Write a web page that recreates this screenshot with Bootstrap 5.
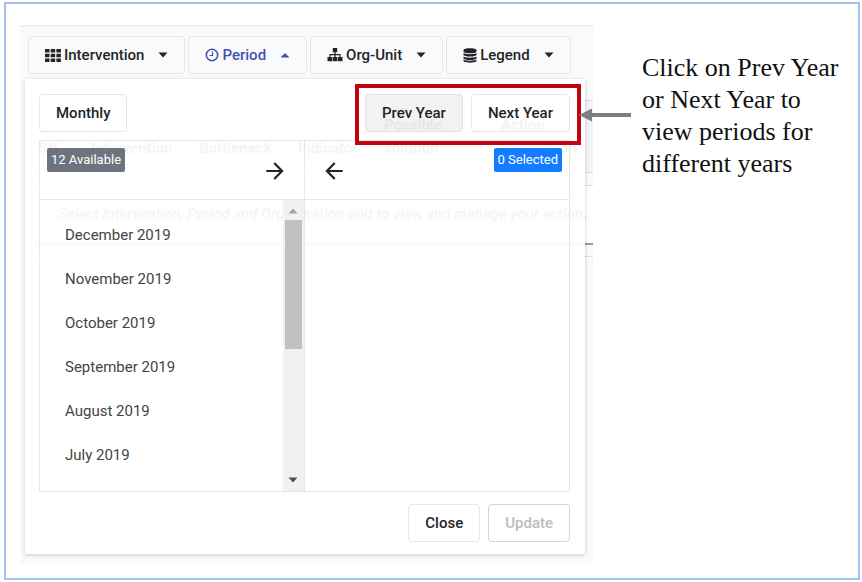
<!DOCTYPE html>
<html lang="en">
<head>
<meta charset="utf-8">
<meta name="viewport" content="width=device-width, initial-scale=1">
<title>Period selection</title>
<link href="https://cdn.jsdelivr.net/npm/bootstrap@5.3.0/dist/css/bootstrap.min.css" rel="stylesheet">
<style>
  body { font-family: Roboto, "Liberation Sans", sans-serif; font-size: 15px; line-height: 24px; color: #212529; background: #fff; }
  .page-frame { margin: 2px 2px 2px 4px; border: 2px solid #a2c4e9; min-height: calc(100vh - 4px); padding: 21px 0 13px 14px; }
  .app-area { flex: 1 1 0; min-width: 0; background: #fafafa; border-top: 2px solid #efefef; padding: 9px 8px 11px 5px; }
  .tool-row { gap: 3px; padding-left: 3px; margin-bottom: 5px; }
  .btn-ui { --bs-btn-font-size: 15px; --bs-btn-font-weight: 500; --bs-btn-line-height: 24px; --bs-btn-padding-x: 16px; --bs-btn-padding-y: 6px; --bs-btn-border-color: #e6e6e6; --bs-btn-color: #212529; --bs-btn-border-radius: 4px; --bs-btn-disabled-border-color: #d4d4d4; --bs-btn-disabled-color: #bdbdbd; --bs-btn-disabled-opacity: 1; --bs-btn-hover-border-color: #ccc; white-space: nowrap; }
  .btn-tool { display: flex; align-items: center; gap: 3px; }
  .btn-tool .caret { margin-left: 11px; }
  .btn-period { --bs-btn-color: #3f51b5; }
  .btn-prev { background: rgba(0,0,0,.05); --bs-btn-border-color: #e2e2e2; }
  .stage { display: grid; grid-template-columns: minmax(0, 1fr); }
  .stage > * { grid-area: 1 / 1; min-width: 0; }
  .plan { margin: 21px -8px 0 9px; overflow: hidden; align-self: start; }
  .plan table { width: 650px; table-layout: fixed; border-collapse: collapse; }
  .plan th { height: 72px; background: #f3f4f5; border-top: 1px solid #cfd8e6; border-bottom: 1px solid #cfd8e6; vertical-align: bottom; line-height: 23px; font-weight: 700; padding: 0 0 12px 4px; }
  .plan td { height: 58px; background: #fff; font-style: italic; font-weight: 500; padding: 0 0 0 24px; white-space: nowrap; border-bottom: 2px solid #999; }
  .plan .spacer-row td { height: 13px; background: #fafafa; border-bottom: 1px solid #ddd; }
  .period-panel { background: rgba(255,255,255,.95); box-shadow: 0 1px 4px rgba(0,0,0,.2); padding: 15px 15px 12px 14px; z-index: 1; }
  .year-nav { position: relative; gap: 8px; }
  .year-nav::after { content: ""; position: absolute; inset: -10px -11px -13px -10px; border: 4px solid #c00510; pointer-events: none; z-index: 2; }
  .pointer-arrow { position: absolute; left: calc(100% + 9px); top: 14px; z-index: 3; }
  .picker { border: 1px solid #e6e6e6; margin: 8px 0 12px; }
  .picker-half { flex: 1 1 0; min-width: 0; }
  .picker-half + .picker-half { border-left: 1px solid #e6e6e6; }
  .picker-top { height: 59px; border-bottom: 1px solid #e6e6e6; padding: 7px; }
  .picker-top .arrow-btn { padding: 0; border: 0; background: none; line-height: 0; align-self: flex-end; margin: 0 9px 8px; }
  .count-tag { --bs-badge-font-size: 13px; --bs-badge-font-weight: 400; --bs-badge-padding-x: 4px; --bs-badge-padding-y: 4px; --bs-badge-border-radius: 2px; line-height: 16px; align-self: flex-start; }
  .tag-gray { background: #6c757d; }
  .tag-blue { background: #147dff; }
  .month-list { padding: 13px 0 14px; }
  .month-list button { border: 0; padding: 10px 25px; background: transparent; color: #444; }
  .scroll-rail { width: 21px; background: #f1f1f1; padding: 7px 0 7px 2px; }
  .scroll-thumb { width: 17px; height: 129px; background: #c1c1c1; margin-top: 5px; }
  .note { flex: 0 0 216px; margin: 27px 0 0 49px; padding-right: 10px; font: 26px/32px "Liberation Serif", serif; color: #111; }
</style>
<script src="https://cdn.jsdelivr.net/npm/bootstrap@5.3.0/dist/js/bootstrap.bundle.min.js"></script>
</head>
<body>
<main class="page-frame d-flex align-items-start">
  <section class="app-area">
    <div class="tool-row d-flex">
      <button type="button" class="btn btn-ui btn-tool">
        <svg width="16" height="13" viewBox="0 0 16 13" fill="currentColor"><path d="M0 0h4.500v3.500H0zM5.700 0h4.500v3.500H5.700zM11.400 0h4.500v3.500h-4.500zM0 4.700h4.500v3.500H0zM5.700 4.700h4.500v3.500H5.700zM11.400 4.700h4.500v3.500h-4.500zM0 9.400h4.500v3.500H0zM5.700 9.400h4.500v3.500H5.700zM11.400 9.400h4.500v3.500h-4.500z"/></svg>
        Intervention
        <svg class="caret" width="10" height="6" viewBox="0 0 10 6" fill="currentColor"><path d="M.5 .5h9L5 5.500z"/></svg>
      </button>
      <button type="button" class="btn btn-ui btn-tool btn-period" aria-expanded="true">
        <svg width="14" height="14" viewBox="0 0 14 14" fill="none" stroke="currentColor"><circle cx="7" cy="7" r="5.700" stroke-width="1.600"/><path d="M7.500 3.500V7.500H4.500" stroke-width="1.200"/></svg>
        Period
        <svg class="caret" width="10" height="6" viewBox="0 0 10 6" fill="currentColor"><path d="M.5 5.500h9L5 1z"/></svg>
      </button>
      <button type="button" class="btn btn-ui btn-tool">
        <svg width="16" height="14" viewBox="0 0 16 14" fill="currentColor"><path d="M5.800 0h4.400v4.200H8.600v1.900h5v3h1.900v4.200h-4.600V9.100h1.600V7.200H8.600v1.900h1.700v4.200H5.700V9.100h1.700V7.200H3.500v1.900h1.600v4.200H.5V9.100h1.900v-3h5V4.200H5.800z"/></svg>
        Org-Unit
        <svg class="caret" width="10" height="6" viewBox="0 0 10 6" fill="currentColor"><path d="M.5 .5h9L5 5.500z"/></svg>
      </button>
      <button type="button" class="btn btn-ui btn-tool">
        <svg width="14" height="15" viewBox="0 0 14 15" fill="currentColor"><path d="M.5 2.200C.5-.3 13.500-.3 13.500 2.200v1.200c0 2.500-13 2.500-13 0zM.5 5.100c2 1.600 11 1.600 13 0v1.700c0 2.400-13 2.400-13 0zM.5 8.500c2 1.600 11 1.600 13 0v1.700c0 2.400-13 2.400-13 0zM.5 11.600c2 1.600 11 1.600 13 0v1.200c0 2.500-13 2.500-13 0z"/></svg>
        Legend
        <svg class="caret" width="10" height="6" viewBox="0 0 10 6" fill="currentColor"><path d="M.5 .5h9L5 5.500z"/></svg>
      </button>
    </div>

    <div class="stage">
      <div class="plan">
        <table>
          <colgroup><col style="width:53px"><col style="width:108px"><col style="width:99px"><col style="width:86px"><col style="width:117px"><col></colgroup>
          <thead><tr><th>SN</th><th>Intervention</th><th>Bottleneck</th><th>Indicator</th><th>Possible<br>solution</th><th>Action<br>description</th></tr></thead>
          <tbody>
            <tr class="spacer-row"><td colspan="6"></td></tr>
            <tr><td colspan="6">Select Intervention, Period and Organisation unit to view and manage your action.</td></tr>
            <tr class="spacer-row"><td colspan="6"></td></tr>
          </tbody>
        </table>
      </div>

      <div class="period-panel">
        <div class="d-flex justify-content-between">
          <button type="button" class="btn btn-ui">Monthly</button>
          <div class="year-nav d-flex">
            <button type="button" class="btn btn-ui btn-prev">Prev Year</button>
            <button type="button" class="btn btn-ui">Next Year</button>
            <svg class="pointer-arrow" width="52" height="14" viewBox="0 0 52 14" fill="#7f7f7f"><path d="M0 7L13 .5V5h39v4H13v4.500z"/></svg>
          </div>
        </div>

        <div class="picker d-flex">
          <div class="picker-half">
            <div class="picker-top d-flex justify-content-between">
              <span class="badge count-tag tag-gray">12 Available</span>
              <button type="button" class="arrow-btn" aria-label="Add all"><svg width="26" height="26" viewBox="0 0 24 24" fill="#212529"><path d="M12 4l-1.410 1.410L16.170 11H4v2h12.170l-5.580 5.590L12 20l8-8z"/></svg></button>
            </div>
            <div class="d-flex">
              <div class="month-list list-group list-group-flush flex-grow-1">
                <button type="button" class="list-group-item list-group-item-action">December 2019</button>
                <button type="button" class="list-group-item list-group-item-action">November 2019</button>
                <button type="button" class="list-group-item list-group-item-action">October 2019</button>
                <button type="button" class="list-group-item list-group-item-action">September 2019</button>
                <button type="button" class="list-group-item list-group-item-action">August 2019</button>
                <button type="button" class="list-group-item list-group-item-action">July 2019</button>
              </div>
              <div class="scroll-rail d-flex flex-column justify-content-between" aria-hidden="true">
                <div>
                  <svg class="d-block" width="17" height="8" viewBox="0 0 17 8" fill="#a3a3a3"><path d="M3.500 6.500h9L8 1.500z"/></svg>
                  <div class="scroll-thumb"></div>
                </div>
                <svg class="d-block" width="17" height="8" viewBox="0 0 17 8" fill="#505050"><path d="M3.500 1.500h9L8 6.500z"/></svg>
              </div>
            </div>
          </div>
          <div class="picker-half">
            <div class="picker-top d-flex justify-content-between">
              <button type="button" class="arrow-btn" aria-label="Remove all"><svg width="26" height="26" viewBox="0 0 24 24" fill="#212529"><path d="M20 11H7.830l5.590-5.590L12 4l-8 8 8 8 1.410-1.410L7.830 13H20v-2z"/></svg></button>
              <span class="badge count-tag tag-blue">0 Selected</span>
            </div>
          </div>
        </div>

        <div class="d-flex justify-content-end gap-2">
          <button type="button" class="btn btn-ui">Close</button>
          <button type="button" class="btn btn-ui" disabled>Update</button>
        </div>
      </div>
    </div>
  </section>
  <p class="note">Click on Prev Year or Next Year to view periods for different years</p>
</main>
</body>
</html>
